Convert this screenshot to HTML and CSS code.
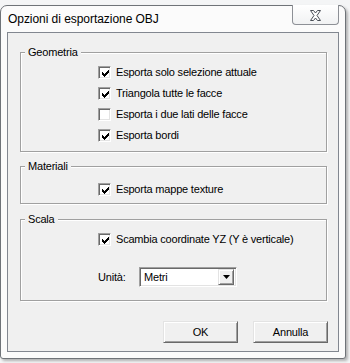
FILE: index.html
```html
<!DOCTYPE html>
<html lang="it">
<head>
<meta charset="utf-8">
<title>Opzioni di esportazione OBJ</title>
<link rel="stylesheet" href="styles.css">
</head>
<body>
<div class="window">
  <div class="titlebar"><span class="title">Opzioni di esportazione OBJ</span></div>
  <div class="close" aria-label="Chiudi">
    <svg width="13" height="11" viewBox="0 0 13 11"><path d="M1.5 0.5 H4.5 L6.5 3 L8.5 0.5 H11.5 L8 5.5 L11.5 10.5 H8.5 L6.5 8 L4.5 10.5 H1.5 L5 5.5 Z" fill="#fff" stroke="#4a4f57" stroke-width="1" stroke-linejoin="round"/></svg>
  </div>
  <div class="client">
    <fieldset class="group">
      <legend>Geometria</legend>
      <div class="group-body geo">
        <label class="check"><span class="box"><svg class="tick" width="7" height="7" viewBox="0 0 7 7"><path d="M0 2h1v3h-1z M1 3h1v3h-1z M2 4h1v3h-1z M3 3h1v3h-1z M4 2h1v3h-1z M5 1h1v3h-1z M6 0h1v3h-1z" fill="#000"/></svg></span>Esporta solo selezione attuale</label>
        <label class="check"><span class="box"><svg class="tick" width="7" height="7" viewBox="0 0 7 7"><path d="M0 2h1v3h-1z M1 3h1v3h-1z M2 4h1v3h-1z M3 3h1v3h-1z M4 2h1v3h-1z M5 1h1v3h-1z M6 0h1v3h-1z" fill="#000"/></svg></span>Triangola tutte le facce</label>
        <label class="check"><span class="box"></span>Esporta i due lati delle facce</label>
        <label class="check"><span class="box"><svg class="tick" width="7" height="7" viewBox="0 0 7 7"><path d="M0 2h1v3h-1z M1 3h1v3h-1z M2 4h1v3h-1z M3 3h1v3h-1z M4 2h1v3h-1z M5 1h1v3h-1z M6 0h1v3h-1z" fill="#000"/></svg></span>Esporta bordi</label>
      </div>
    </fieldset>
    <fieldset class="group mat">
      <legend>Materiali</legend>
      <div class="group-body matb">
        <label class="check"><span class="box"><svg class="tick" width="7" height="7" viewBox="0 0 7 7"><path d="M0 2h1v3h-1z M1 3h1v3h-1z M2 4h1v3h-1z M3 3h1v3h-1z M4 2h1v3h-1z M5 1h1v3h-1z M6 0h1v3h-1z" fill="#000"/></svg></span>Esporta mappe texture</label>
      </div>
    </fieldset>
    <fieldset class="group scala">
      <legend>Scala</legend>
      <div class="group-body scb">
        <label class="check"><span class="box"><svg class="tick" width="7" height="7" viewBox="0 0 7 7"><path d="M0 2h1v3h-1z M1 3h1v3h-1z M2 4h1v3h-1z M3 3h1v3h-1z M4 2h1v3h-1z M5 1h1v3h-1z M6 0h1v3h-1z" fill="#000"/></svg></span>Scambia coordinate YZ (Y è verticale)</label>
        <div class="unit-row">
          <span class="unit-label">Unità:</span>
          <div class="combo">
            <span class="combo-text">Metri</span>
            <span class="combo-btn"><svg width="7" height="4" viewBox="0 0 7 4"><path d="M0 0 H7 L3.5 4 Z" fill="#000"/></svg></span>
          </div>
        </div>
      </div>
    </fieldset>
    <div class="actions">
      <button class="btn">OK</button>
      <button class="btn">Annulla</button>
    </div>
  </div>
</div>
</body>
</html>
```

FILE: styles.css
```css
* { box-sizing: border-box; }

html, body {
  margin: 0;
  padding: 0;
}

body {
  width: 350px;
  height: 363px;
  overflow: hidden;
  background: #f4f5f6;
  font-family: "Liberation Sans", Arial, sans-serif;
  font-size: 11px;
  color: #000;
}

.window {
  position: relative;
  margin-top: 5px;
  width: 346px;
  height: 354px;
  border: 1px solid #6f7378;
  border-radius: 7px 7px 3px 3px;
  background: #fbfbfb;
  box-shadow: 2px 2px 3px rgba(0, 0, 0, 0.28);
  padding: 0 6px 6px 6px;
}

.titlebar {
  height: 26px;
  padding: 6px 0 0 1px;
}

.title {
  font-size: 12px;
  line-height: 15px;
  color: #000;
  letter-spacing: -0.05px;
}

.close {
  position: absolute;
  top: -1px;
  right: 6px;
  width: 47px;
  height: 20px;
  border: 1px solid #8d9096;
  border-top: none;
  border-radius: 0 0 4px 4px;
  background: linear-gradient(#ffffff, #f1f2f3);
  display: flex;
  align-items: center;
  justify-content: center;
  padding-top: 1px;
}

.close svg { display: block; }

.client {
  height: 320px;
  border: 1px solid #828790;
  background: #f0f0f0;
  padding: 13px 11px 0 12px;
}

.group {
  margin: 0;
  padding: 0;
  min-width: 0;
  border: 1px solid #a0a0a0;
  box-shadow: inset 1px 1px 0 #fff, 1px 1px 0 #fff;
}

.group legend {
  margin-left: 4px;
  padding: 0 3px;
  line-height: 13px;
  background: #f0f0f0;
  letter-spacing: -0.2px;
}

.group.mat { margin-top: 8px; }
.group.scala { margin-top: 9px; }

.group-body {
  display: flex;
  flex-direction: column;
  padding-left: 77px;
}

.group-body.geo { padding-top: 2px; padding-bottom: 6px; }
.group-body.matb { padding-top: 5px; padding-bottom: 4px; }
.group-body.scb { padding-top: 2px; padding-bottom: 13px; }

.check {
  height: 21px;
  display: flex;
  align-items: center;
  gap: 5px;
  letter-spacing: -0.2px;
}

.box {
  width: 13px;
  height: 13px;
  flex: none;
  background: #fff;
  border: 1px solid;
  border-color: #a0a0a0 #fff #fff #a0a0a0;
  box-shadow: inset 1px 1px 0 #696969, inset -1px -1px 0 #e3e3e3;
  padding: 3px 0 0 3px;
  margin-top: 2px;
}

.tick {
  display: block;
  shape-rendering: crispEdges;
}

.unit-row {
  margin-top: 18px;
  display: flex;
  align-items: center;
  height: 20px;
}

.unit-label {
  width: 41px;
  letter-spacing: -0.2px;
}

.combo {
  width: 98px;
  height: 20px;
  background: #fff;
  border: 1px solid;
  border-color: #a0a0a0 #fff #fff #a0a0a0;
  box-shadow: inset 1px 1px 0 #696969, inset -1px -1px 0 #e3e3e3;
  display: flex;
  align-items: center;
  padding: 2px 2px 2px 4px;
}

.combo-text {
  flex: 1;
  letter-spacing: -0.2px;
}

.combo-btn {
  width: 16px;
  height: 16px;
  background: #f0f0f0;
  border: 1px solid;
  border-color: #e3e3e3 #696969 #696969 #e3e3e3;
  box-shadow: inset 1px 1px 0 #fff, inset -1px -1px 0 #a0a0a0;
  display: flex;
  align-items: center;
  justify-content: center;
}

.combo-btn svg { display: block; }

.actions {
  margin-top: 20px;
  display: flex;
  justify-content: flex-end;
  gap: 15px;
  margin-right: -1px;
}

.btn {
  width: 75px;
  height: 22px;
  margin: 0;
  padding: 0;
  font-family: "Liberation Sans", Arial, sans-serif;
  font-size: 11px;
  letter-spacing: -0.2px;
  color: #000;
  background: #f0f0f0;
  border: 1px solid;
  border-color: #e3e3e3 #696969 #696969 #e3e3e3;
  box-shadow: inset 1px 1px 0 #fff, inset -1px -1px 0 #a0a0a0;
}
```
